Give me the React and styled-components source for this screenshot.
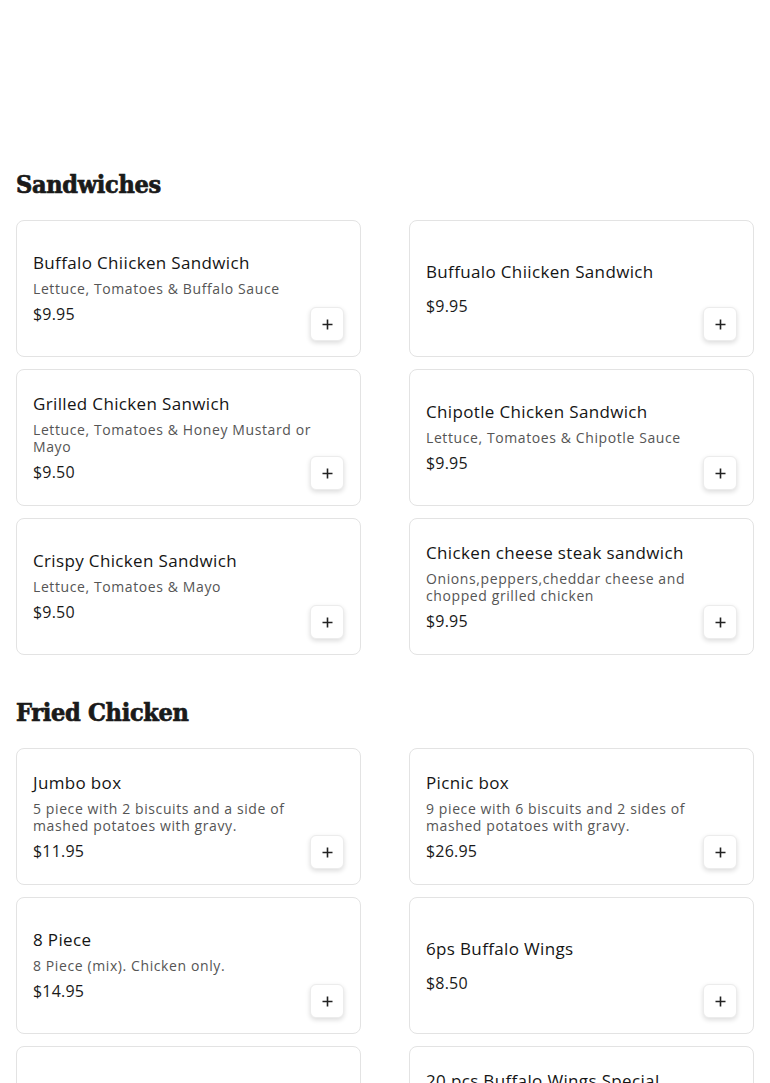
import React from "react";
import styled, { createGlobalStyle } from "styled-components";

const GlobalStyle = createGlobalStyle`
  * { box-sizing: border-box; }
  html, body { margin: 0; padding: 0; background: #ffffff; }
  body {
    font-family: "Open Sans", "Liberation Sans", sans-serif;
    color: #111111;
    -webkit-font-smoothing: antialiased;
  }
`;

const Page = styled.div`
  width: 770px;
  padding: 167px 16px 40px;
`;

const Section = styled.section`
  display: flex;
  flex-direction: column;
  margin-bottom: 40px;
`;

const SectionTitle = styled.h2`
  margin: 0 0 17px;
  font-family: "DejaVu Serif Condensed", "DejaVu Serif", "Liberation Serif", serif;
  font-stretch: condensed;
  font-weight: 900;
  font-size: 25px;
  line-height: 36px;
  color: #1a1a1a;
  letter-spacing: -0.3px;
  -webkit-text-stroke: 0.7px #1a1a1a;
`;

const Grid = styled.div`
  display: grid;
  grid-template-columns: 1fr 1fr;
  column-gap: 48px;
  row-gap: 12px;
`;

const Card = styled.div`
  display: flex;
  align-items: flex-end;
  height: 137px;
  padding: 0 16px 15px 16px;
  border: 1px solid #e3e3e3;
  border-radius: 8px;
  background: #fff;
`;

const Info = styled.div`
  flex: 1;
  min-width: 0;
  align-self: center;
  display: flex;
  flex-direction: column;
  margin-bottom: -15px;
  margin-right: -12px;
`;

const Title = styled.div`
  font-size: 17px;
  font-weight: 500;
  line-height: 22px;
  letter-spacing: 0.35px;
  color: #151515;
  margin-bottom: 6px;
`;

const Desc = styled.div`
  font-size: 14px;
  font-weight: 400;
  line-height: 17px;
  letter-spacing: 0.6px;
  color: #555555;
  margin-bottom: 6px;
`;

const Price = styled.div`
  font-size: 16px;
  font-weight: 400;
  line-height: 22px;
  letter-spacing: 0.2px;
  color: #1a1a1a;
`;

const AddButton = styled.button`
  flex: none;
  width: 34px;
  height: 34px;
  display: flex;
  align-items: center;
  justify-content: center;
  padding: 0;
  border: 1px solid #ececec;
  border-radius: 6px;
  background: #ffffff;
  box-shadow: 0 2px 5px rgba(0, 0, 0, 0.14);
  cursor: pointer;
`;

const PlusIcon = () => (
  <svg width="11" height="11" viewBox="0 0 11 11" fill="none">
    <path d="M5.5 0.5v10M0.5 5.5h10" stroke="#222" strokeWidth="1.6" />
  </svg>
);

const sections = [
  {
    title: "Sandwiches",
    items: [
      { name: "Buffalo Chiicken Sandwich", desc: "Lettuce, Tomatoes & Buffalo Sauce", price: "$9.95" },
      { name: "Buffualo Chiicken Sandwich", desc: "", price: "$9.95" },
      { name: "Grilled Chicken Sanwich", desc: "Lettuce, Tomatoes & Honey Mustard or Mayo", price: "$9.50" },
      { name: "Chipotle Chicken Sandwich", desc: "Lettuce, Tomatoes & Chipotle Sauce", price: "$9.95" },
      { name: "Crispy Chicken Sandwich", desc: "Lettuce, Tomatoes & Mayo", price: "$9.50" },
      { name: "Chicken cheese steak sandwich", desc: "Onions,peppers,cheddar cheese and chopped grilled chicken", price: "$9.95" },
    ],
  },
  {
    title: "Fried Chicken",
    items: [
      { name: "Jumbo box", desc: "5 piece with 2 biscuits and a side of mashed potatoes with gravy.", price: "$11.95" },
      { name: "Picnic box", desc: "9 piece with 6 biscuits and 2 sides of mashed potatoes with gravy.", price: "$26.95" },
      { name: "8 Piece", desc: "8 Piece (mix). Chicken only.", price: "$14.95" },
      { name: "6ps Buffalo Wings", desc: "", price: "$8.50" },
      { name: "12ps Buffalo Wings", desc: "", price: "$15.95" },
      { name: "20 pcs Buffalo Wings Special", desc: "20 piece buffalo wings with celery and blue cheese dressing.", price: "$24.95" },
    ],
  },
];

export default function App() {
  return (
    <>
      <GlobalStyle />
      <Page>
        {sections.map((s) => (
          <Section key={s.title}>
            <SectionTitle>{s.title}</SectionTitle>
            <Grid>
              {s.items.map((it) => (
                <Card key={it.name}>
                  <Info>
                    <Title>{it.name}</Title>
                    <Desc>{it.desc}</Desc>
                    <Price>{it.price}</Price>
                  </Info>
                  <AddButton aria-label="Add">
                    <PlusIcon />
                  </AddButton>
                </Card>
              ))}
            </Grid>
          </Section>
        ))}
      </Page>
    </>
  );
}
